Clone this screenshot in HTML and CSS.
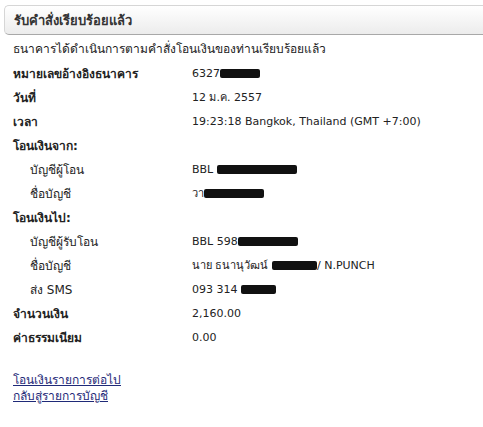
FILE: index.html
```html
<!DOCTYPE html>
<html lang="th">
<head>
    <meta charset="UTF-8">
    <title>รับคำสั่งเรียบร้อยแล้ว</title>
    <link rel="stylesheet" href="styles.css">
</head>
<body>
    <div class="panel-head">รับคำสั่งเรียบร้อยแล้ว</div>
    <p class="intro">ธนาคารได้ดำเนินการตามคำสั่งโอนเงินของท่านเรียบร้อยแล้ว</p>

    <table class="details">
        <tr>
            <th>หมายเลขอ้างอิงธนาคาร</th>
            <td>6327<span class="redact w40"></span></td>
        </tr>
        <tr>
            <th>วันที่</th>
            <td>12 ม.ค. 2557</td>
        </tr>
        <tr>
            <th>เวลา</th>
            <td>19:23:18 Bangkok, Thailand (GMT +7:00)</td>
        </tr>
        <tr>
            <th colspan="2">โอนเงินจาก:</th>
        </tr>
        <tr class="sub">
            <th>บัญชีผู้โอน</th>
            <td>BBL <span class="redact w80"></span></td>
        </tr>
        <tr class="sub">
            <th>ชื่อบัญชี</th>
            <td>วา<span class="redact w60"></span></td>
        </tr>
        <tr>
            <th colspan="2">โอนเงินไป:</th>
        </tr>
        <tr class="sub">
            <th>บัญชีผู้รับโอน</th>
            <td>BBL 598<span class="redact w60"></span></td>
        </tr>
        <tr class="sub">
            <th>ชื่อบัญชี</th>
            <td>นาย ธนานุวัฒน์ <span class="redact w45"></span>/ N.PUNCH</td>
        </tr>
        <tr class="sub">
            <th>ส่ง SMS</th>
            <td>093 314 <span class="redact w35"></span></td>
        </tr>
        <tr>
            <th>จำนวนเงิน</th>
            <td>2,160.00</td>
        </tr>
        <tr>
            <th>ค่าธรรมเนียม</th>
            <td>0.00</td>
        </tr>
    </table>

    <div class="links">
        <a href="#">โอนเงินรายการต่อไป</a>
        <a href="#">กลับสู่รายการบัญชี</a>
    </div>
</body>
</html>
```

FILE: styles.css
```css
body {
    margin: 0;
    padding: 5px 0 0 4px;
    font-family: Tahoma, "DejaVu Sans", sans-serif;
    font-size: 12px;
    color: #222;
    background: #fff;
}
.panel-head {
    height: 28px;
    line-height: 30px;
    padding-left: 9px;
    border: 1px solid #d6d6d6;
    border-bottom-color: #a8a8a8;
    border-right: none;
    border-radius: 5px 0 0 5px;
    background: linear-gradient(#ffffff, #ececec);
    font-weight: bold;
    font-size: 13px;
    color: #333;
}
.intro {
    margin: 5px 0 0 9px;
    line-height: 18px;
}
.details {
    margin: 3px 0 0 9px;
    border-collapse: collapse;
}
.details th,
.details td {
    height: 24px;
    padding: 0;
    text-align: left;
    vertical-align: middle;
}
.details td {
    font-size: 11px;
}
.details th {
    width: 179px;
    font-weight: bold;
}
.details .sub th {
    font-weight: normal;
    padding-left: 17px;
    width: 162px;
}
.redact {
    display: inline-block;
    height: 9px;
    background: #111;
    vertical-align: -1px;
    border-radius: 2px;
}
.w35 { width: 35px; }
.w40 { width: 40px; }
.w45 { width: 45px; }
.w60 { width: 60px; }
.w80 { width: 80px; }
.links {
    margin: 23px 0 0 9px;
    display: flex;
    flex-direction: column;
    align-items: flex-start;
}
.links a {
    display: block;
    height: 16px;
    line-height: 16px;
    color: #1f2a78;
}
```
